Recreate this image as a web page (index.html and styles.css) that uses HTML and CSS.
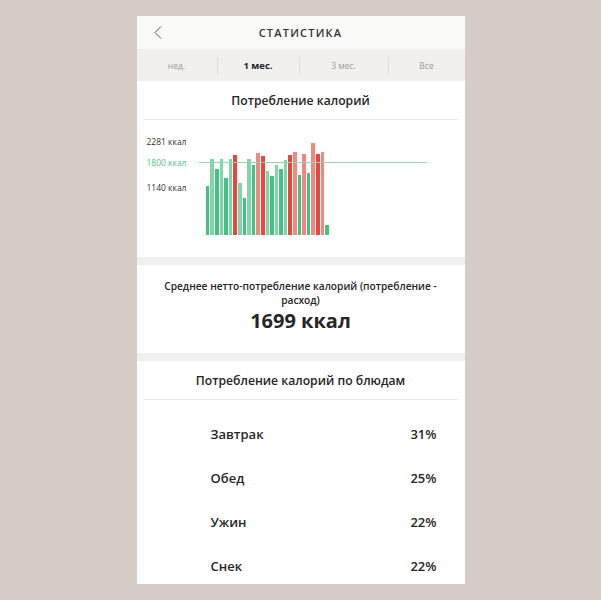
FILE: index.html
```html
<html>

<head>
    <title>Статистика</title>
    <link rel="stylesheet" href="styles.css">
</head>

<body>
    <div class="phone">
        <div class="header">
            <span class="back">
                <svg width="8" height="13" viewBox="0 0 8 13"><path d="M7 0.5 L1 6.5 L7 12.5" fill="none" stroke="#555" stroke-width="1"/></svg>
            </span>
            <span class="header-title">СТАТИСТИКА</span>
            <span></span>
        </div>
        <div class="tabs">
            <div class="tab">нед.</div>
            <div class="tab active">1 мес.</div>
            <div class="tab">3 мес.</div>
            <div class="tab">Все</div>
        </div>

        <div class="card chart-card">
            <div class="card-title">Потребление калорий</div>
            <div class="divider"></div>
            <div class="chart">
                <div class="axis">
                    <div class="axis-label top">2281 ккал</div>
                    <div class="axis-label goal">1800 ккал</div>
                    <div class="axis-label low">1140 ккал</div>
                </div>
                <div class="plot">
                    <div class="goal-line"></div>
                    <div class="bars">
                        <div class="bar green" style="height:48.6px"></div>
                        <div class="bar green light" style="height:75.3px"></div>
                        <div class="bar green" style="height:65.3px"></div>
                        <div class="bar green light" style="height:76px"></div>
                        <div class="bar green" style="height:56.3px"></div>
                        <div class="bar green light" style="height:75.3px"></div>
                        <div class="bar red" style="height:79.3px"></div>
                        <div class="bar green light" style="height:52px"></div>
                        <div class="bar green" style="height:36.6px"></div>
                        <div class="bar green light" style="height:75.3px"></div>
                        <div class="bar green" style="height:70px"></div>
                        <div class="bar red light" style="height:81.3px"></div>
                        <div class="bar red" style="height:78.6px"></div>
                        <div class="bar green light" style="height:63.3px"></div>
                        <div class="bar green" style="height:58.6px"></div>
                        <div class="bar green light" style="height:70px"></div>
                        <div class="bar green" style="height:65.3px"></div>
                        <div class="bar green light" style="height:74.3px"></div>
                        <div class="bar red" style="height:80px"></div>
                        <div class="bar red light" style="height:83px"></div>
                        <div class="bar green" style="height:60px"></div>
                        <div class="bar red light" style="height:81px"></div>
                        <div class="bar green" style="height:61.3px"></div>
                        <div class="bar red light" style="height:91.3px"></div>
                        <div class="bar red" style="height:80.6px"></div>
                        <div class="bar red light" style="height:82.3px"></div>
                        <div class="bar green" style="height:10px"></div>
                    </div>
                </div>
            </div>
        </div>

        <div class="card avg-card">
            <div class="avg-caption">Среднее нетто-потребление калорий (потребление - расход)</div>
            <div class="avg-value">1699 ккал</div>
        </div>

        <div class="card meals-card">
            <div class="card-title">Потребление калорий по блюдам</div>
            <div class="divider"></div>
            <div class="meals">
                <div class="meal"><span>Завтрак</span><span>31%</span></div>
                <div class="meal"><span>Обед</span><span>25%</span></div>
                <div class="meal"><span>Ужин</span><span>22%</span></div>
                <div class="meal"><span>Снек</span><span>22%</span></div>
            </div>
        </div>
    </div>
</body>

</html>
```

FILE: styles.css
```css
body {
    margin: 0;
    background-color: #d7cdc8;
    font-family: "Open Sans", "Noto Sans", sans-serif;
    color: #262626;
}

.phone {
    width: 328px;
    height: 568px;
    margin: 16px auto 0 auto;
    background-color: #f1f0ef;
    overflow: hidden;
    display: flex;
    flex-direction: column;
}

.phone > div {
    flex-shrink: 0;
}

/* top bar */
.header {
    height: 33px;
    background-color: #fafaf9;
    display: grid;
    grid-template-columns: 40px 1fr 40px;
    align-items: center;
}

.back {
    padding-left: 17px;
    display: flex;
}

.header-title {
    text-align: center;
    font-size: 11px;
    font-weight: 600;
    letter-spacing: 1.2px;
    color: #333;
}

.tabs {
    height: 32px;
    display: grid;
    grid-template-columns: 80px 82px 89px 1fr;
    align-items: center;
    background-color: #f1f0ef;
}

.tab {
    text-align: center;
    font-size: 8.5px;
    color: #9a9a9a;
    line-height: 17px;
}

.tab + .tab {
    border-left: 1px solid #dedcda;
}

.tab.active {
    font-size: 9.5px;
    font-weight: 700;
    color: #222;
}

/* cards */
.card {
    background-color: #fff;
}

.card-title {
    text-align: center;
    font-size: 12.2px;
    font-weight: 600;
    height: 38px;
    line-height: 36px;
    padding-top: 2px;
    box-sizing: border-box;
}

.divider {
    height: 1px;
    margin: 0 7px;
    background-color: #e9e7e5;
}

.chart-card {
    height: 176px;
}

.chart {
    display: flex;
    padding-top: 10.5px;
}

.axis {
    width: 50px;
    text-align: right;
    padding-top: 5px;
}

.axis-label {
    font-size: 8.5px;
    line-height: 12px;
    color: #333;
}

.axis-label.goal {
    color: #4fc48b;
    margin-top: 9.5px;
}

.axis-label.low {
    margin-top: 12.5px;
}

.plot {
    position: relative;
    margin-left: 12px;
    width: 228px;
    height: 104px;
}

.goal-line {
    position: absolute;
    left: 0;
    right: 0;
    top: 31px;
    height: 1px;
    background-color: #92d6b8;
}

.bars {
    height: 100%;
    display: flex;
    align-items: flex-end;
    gap: 1px;
    padding-left: 7.3px;
}

.bar {
    width: 3.6px;
}

.bar.green {
    background-color: #45c184;
}

.bar.green.light {
    background-color: #7dd7a7;
}

.bar.red {
    background-color: #e9463e;
}

.bar.red.light {
    background-color: #f2877e;
}

.avg-card {
    margin-top: 8px;
    height: 88px;
    text-align: center;
    padding: 15px 18px 0 18px;
    box-sizing: border-box;
}

.avg-caption {
    font-size: 10.2px;
    font-weight: 600;
    line-height: 13.5px;
}

.avg-value {
    font-size: 20px;
    font-weight: 700;
    line-height: 28px;
}

.meals-card {
    margin-top: 8px;
    flex: 1;
}

.meals {
    padding: 24px 28px 0 74px;
}

.meal {
    display: flex;
    justify-content: space-between;
    font-size: 13px;
    font-weight: 600;
    line-height: 20px;
    margin-bottom: 24px;
}
```
